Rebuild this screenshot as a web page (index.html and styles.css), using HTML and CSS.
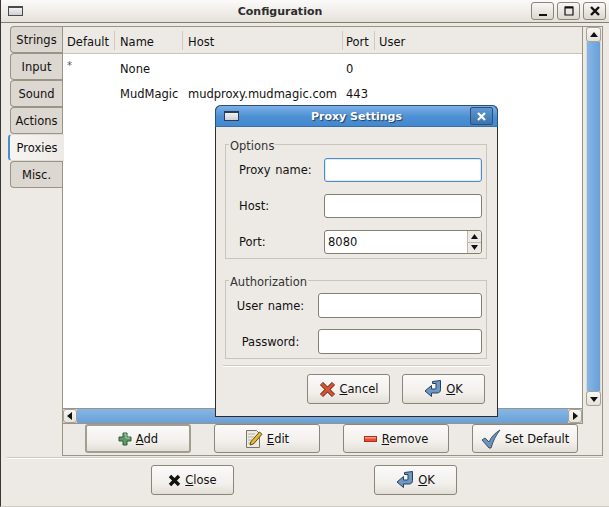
FILE: index.html
```html
<!DOCTYPE html>
<html lang="en">
<head>
<meta charset="utf-8">
<title>Configuration</title>
<link rel="stylesheet" href="styles.css">
</head>
<body>
<div class="window">
  <header class="titlebar">
    <span class="win-icon"></span>
    <span class="title">Configuration</span>
    <div class="win-buttons">
      <span class="win-btn"><svg width="12" height="12" viewBox="0 0 12 12"><rect x="2" y="9" width="8" height="2" fill="#111"/></svg></span>
      <span class="win-btn"><svg width="12" height="12" viewBox="0 0 12 12"><path d="M2 2h8v8H2z" fill="none" stroke="#111" stroke-width="1.2"/><rect x="2" y="1.5" width="8" height="2" fill="#111"/></svg></span>
      <span class="win-btn"><svg width="12" height="12" viewBox="0 0 12 12"><path d="M2 2l8 8M10 2l-8 8" stroke="#111" stroke-width="2.4"/></svg></span>
    </div>
  </header>
  <div class="body">
    <nav class="tabs">
      <div class="tab">Strings</div>
      <div class="tab">Input</div>
      <div class="tab">Sound</div>
      <div class="tab">Actions</div>
      <div class="tab active">Proxies</div>
      <div class="tab">Misc.</div>
    </nav>
    <section class="panel">
      <div class="list-row">
        <div class="list-col">
          <div class="list">
            <div class="list-head">
              <span class="c1 hd">Default</span><span class="c2 hd">Name</span><span class="c3 hd">Host</span><span class="c4 hd">Port</span><span class="c5 hd">User</span>
            </div>
            <div class="row"><span class="c1 star">*</span><span class="c2">None</span><span class="c3"></span><span class="c4">0</span><span class="c5"></span></div>
            <div class="row"><span class="c1"></span><span class="c2">MudMagic</span><span class="c3">mudproxy.mudmagic.com</span><span class="c4">443</span><span class="c5"></span></div>
          </div>
          <div class="hscroll">
            <span class="arrow-btn"><svg width="6" height="8" viewBox="0 0 6 8"><path d="M5 0v8L0 4z" fill="#111"/></svg></span>
            <span class="thumb"></span>
            <span class="arrow-btn end"><svg width="6" height="8" viewBox="0 0 6 8"><path d="M1 0v8l5-4z" fill="#111"/></svg></span>
          </div>
        </div>
        <div class="vscroll">
          <span class="arrow-btn up"><svg width="8" height="6" viewBox="0 0 8 6"><path d="M0 5h8L4 0z" fill="#111"/></svg></span>
          <span class="vthumb"></span>
          <span class="arrow-btn up"><svg width="8" height="6" viewBox="0 0 8 6"><path d="M0 1h8L4 6z" fill="#111"/></svg></span>
        </div>
      </div>
      <div class="actions">
        <button class="btn wide default"><svg class="ico" width="14" height="14" viewBox="0 0 14 14"><path d="M5 1h4v4h4v4H9v4H5V9H1V5h4z" fill="#5f9a66" stroke="#2f5b38" stroke-linejoin="round"/><path d="M6 2h2v4h4" fill="none" stroke="#a8d4ac"/></svg><span><u>A</u>dd</span></button>
        <button class="btn wide"><svg class="ico" width="18" height="20" viewBox="0 0 18 20"><path d="M1.500 1.500h10l3 3v14h-13z" fill="#eeebe2" stroke="#77746c"/><path d="M3 5h7M3 8h6M3 11h4M3 14h3" stroke="#b3b0a8"/><path d="M5 16l1-3.500L14.500 3l2.500 2.200L8.500 15z" fill="#e8b730" stroke="#4f4018" stroke-width=".9"/></svg><span><u>E</u>dit</span></button>
        <button class="btn wide"><svg class="ico" width="14" height="8" viewBox="0 0 14 8"><rect x=".5" y="1.500" width="12" height="5" fill="#ef4a35" stroke="#a8301f"/><rect x="1" y="2" width="11" height="1.500" fill="#f79a86"/></svg><span><u>R</u>emove</span></button>
        <button class="btn wide"><svg class="ico" width="20" height="20" viewBox="0 0 20 20"><path d="M1 11l3-2 4 4c2-5 6-9 11-12-4 5-7 11-9 18H8z" fill="#6f92b8" stroke="#2f4866" stroke-width=".9"/></svg><span>Set Default</span></button>
      </div>
    </section>
  </div>
  <hr class="sep main-sep">
  <footer class="footer">
    <button class="btn"><svg class="ico" width="13" height="13" viewBox="0 0 13 13"><path d="M2 2l9 9M11 2l-9 9" stroke="#111" stroke-width="3.400"/></svg><span><u>C</u>lose</span></button>
    <button class="btn"><svg class="ico" width="18" height="18" viewBox="0 0 18 18"><path d="M8.500 1.500l8-1v9c0 2.500-1.500 3.500-3.500 3.500H7.500v3.500L1 11l6.500-5.500V9H11c.8 0 1-.4 1-1V3.500H8.500z" fill="#6f97c4" stroke="#24405f" stroke-linejoin="round"/></svg><span><u>O</u>K</span></button>
  </footer>
</div>

<div class="dialog">
  <header class="dlg-title">
    <span class="win-icon dlg-icon"></span>
    <span class="dlg-text">Proxy Settings</span>
    <span class="dlg-close"><svg width="11" height="11" viewBox="0 0 11 11"><path d="M2 2l7 7M9 2l-7 7" stroke="#fff" stroke-width="2.200"/></svg></span>
  </header>
  <div class="dlg-body">
    <fieldset class="group options">
      <legend>Options</legend>
      <div class="field"><label>Proxy name:</label><div class="input focus"></div></div>
      <div class="field"><label>Host:</label><div class="input"></div></div>
      <div class="field"><label>Port:</label>
        <div class="input spin"><span class="value">8080</span>
          <span class="spin-btns">
            <span><svg width="7" height="5" viewBox="0 0 7 5"><path d="M0 5h7L3.500 0z" fill="#111"/></svg></span>
            <span><svg width="7" height="5" viewBox="0 0 7 5"><path d="M0 0h7L3.500 5z" fill="#111"/></svg></span>
          </span>
        </div>
      </div>
    </fieldset>
    <fieldset class="group auth">
      <legend>Authorization</legend>
      <div class="field"><label>User name:</label><div class="input"></div></div>
      <div class="field"><label>Password:</label><div class="input"></div></div>
    </fieldset>
    <hr class="sep dlg-sep">
    <div class="dlg-actions">
      <button class="btn"><svg class="ico" width="17" height="17" viewBox="0 0 17 17"><path d="M2.500 2.500l12 12M14.500 2.500l-12 12" stroke="#5a2a20" stroke-width="4.400"/><path d="M2.500 2.500l12 12M14.500 2.500l-12 12" stroke="#d9542e" stroke-width="2.800"/></svg><span><u>C</u>ancel</span></button>
      <button class="btn"><svg class="ico" width="18" height="18" viewBox="0 0 18 18"><path d="M8.500 1.500l8-1v9c0 2.500-1.500 3.500-3.500 3.500H7.500v3.500L1 11l6.500-5.500V9H11c.8 0 1-.4 1-1V3.500H8.500z" fill="#6f97c4" stroke="#24405f" stroke-linejoin="round"/></svg><span><u>O</u>K</span></button>
    </div>
  </div>
</div>
</body>
</html>
```

FILE: styles.css
```css
* { box-sizing: border-box; }
html, body { margin: 0; padding: 0; }
body {
  width: 609px;
  height: 507px;
  overflow: hidden;
  position: relative;
  background: #edeae6;
  font-family: "DejaVu Sans", sans-serif;
  font-size: 11.5px;
  color: #111;
}
.window {
  width: 609px;
  height: 507px;
  display: flex;
  flex-direction: column;
  border-left: 1px solid #3a3834;
  border-bottom: 1px solid #cfccc6;
}
.titlebar {
  height: 23px;
  flex: none;
  display: flex;
  align-items: center;
  position: relative;
  padding: 0 0 0 7px;
  background: linear-gradient(#fbfafa 0, #f1eeea 50%, #e6e1d9 100%);
  border-bottom: 1px solid #857f70;
}
.win-icon {
  width: 15px;
  height: 10px;
  border: 1px solid #4a4a4a;
  border-top-width: 2px;
  background: linear-gradient(#f2f2f2, #cfd0d2);
}
.title {
  position: absolute;
  left: 0;
  right: 0;
  text-align: center;
  font-weight: bold;
  font-size: 11px;
  color: #2d2d2d;
  padding-right: 50px;
}
.win-buttons {
  margin-left: auto;
  display: flex;
  gap: 3px;
  margin-right: 3px;
  margin-top: -1px;
}
.win-btn {
  width: 23px;
  height: 18px;
  border: 1px solid #8b8679;
  border-radius: 3px;
  background: linear-gradient(#f8f7f5, #dcd8d0);
  display: flex;
  align-items: center;
  justify-content: center;
}
.body {
  flex: none;
  height: 433px;
  display: flex;
  padding: 3px 6px 0 8px;
}
.tabs {
  width: 53px;
  flex: none;
  display: flex;
  flex-direction: column;
}
.tab {
  height: 27px;
  padding-top: 1px;
  display: flex;
  align-items: center;
  justify-content: center;
  background: #dcd7d0;
  border: 1px solid #9a9484;
  border-right: 0;
  border-radius: 4px 0 0 4px;
  margin-left: 1px;
  color: #111;
}
.tab.active {
  margin-left: -1px;
  margin-right: -1px;
  width: 56px;
  position: relative;
  z-index: 1;
  background: linear-gradient(90deg, #f7f5f3, #edeae6);
  border-color: #4f8ac9;
  border-left-width: 2px;
  border-top-color: #ddd;
  border-bottom-color: #ddd;
}
.panel {
  flex: 1;
  border: 1px solid #9a9484;
  display: flex;
  flex-direction: column;
  min-width: 0;
}
.list-row {
  flex: 1;
  min-height: 0;
  display: flex;
  gap: 3px;
  padding-right: 1px;
}
.list-col {
  flex: 1;
  display: flex;
  flex-direction: column;
  min-width: 0;
}
.list {
  flex: 1;
  background: #fff;
  border-bottom: 1px solid #9a9484;
  border-right: 1px solid #9a9484;
}
.list-head {
  height: 27px;
  display: flex;
  align-items: center;
  background: #edeae6;
  border-bottom: 1px solid #c9c5bc;
}
.row {
  display: flex;
  align-items: center;
  height: 25px;
  margin-top: 2px;
}
.row + .row { margin-top: 0; }
.c1 { width: 52px; padding-left: 4px; flex: none; }
.c2 { width: 68px; padding-left: 5px; flex: none; white-space: nowrap; }
.c3 { width: 160px; padding-left: 5px; flex: none; white-space: nowrap; }
.c4 { width: 32px; padding-left: 3px; flex: none; }
.c5 { flex: 1; padding-left: 4px; }
.hd { height: 19px; line-height: 22px; border-right: 1px solid #cfcbc3; }
.hd.c5 { border-right: 0; }
.star { color: #555; font-size: 10px; padding-bottom: 6px; }
.hscroll {
  height: 15px;
  flex: none;
  display: flex;
  border-right: 1px solid #9a9484;
  border-bottom: 1px solid #9a9484;
  background: #dcd7d0;
}
.arrow-btn {
  flex: none;
  width: 14px;
  display: flex;
  align-items: center;
  justify-content: center;
  border: 1px solid #a8a294;
  border-radius: 3px;
  background: linear-gradient(#f8f7f5, #e6e2dc);
}
.thumb {
  flex: 1;
  background: linear-gradient(#86b6e6, #69a0d8);
}
.vscroll {
  width: 15px;
  flex: none;
  display: flex;
  flex-direction: column;
  margin-bottom: 18px;
  background: #dcd7d0;
}
.arrow-btn.up { width: 15px; height: 15px; }
.vthumb {
  flex: 1;
  background: linear-gradient(90deg, #86b6e6, #69a0d8);
  margin: 0 1px;
}
.actions {
  flex: none;
  height: 31px;
  display: flex;
  justify-content: flex-start;
  gap: 23px;
  padding: 0 0 0 22px;
}
.btn {
  height: 30px;
  width: 83px;
  display: flex;
  align-items: center;
  justify-content: center;
  gap: 4px;
  padding: 0;
  border: 1px solid #8b8679;
  border-radius: 3px;
  background: linear-gradient(#fbfafa, #f2efeb 65%, #e2ded7);
  font-family: inherit;
  font-size: 11.5px;
  color: #111;
}
.btn.wide { width: 106px; height: 29px; }
.btn.default { border: 2px solid #a39d8e; }
.ico { flex: none; }
.sep {
  border: 0;
  margin: 0;
  height: 2px;
  background: #cfcbc3;
  border-bottom: 1px solid #fff;
}
.main-sep { margin: 1px 6px 0 6px; flex: none; }
.footer {
  flex: none;
  display: flex;
  gap: 140px;
  justify-content: flex-start;
  padding: 6px 0 0 150px;
}
.dialog {
  position: absolute;
  left: 215px;
  top: 105px;
  width: 283px;
  height: 312px;
  background: #edeae6;
  border: 1px solid #2d2c28;
  border-top: 0;
  border-radius: 6px 6px 0 0;
  z-index: 5;
  display: flex;
  flex-direction: column;
}
.dlg-title {
  height: 22px;
  flex: none;
  margin: 0 -1px;
  display: flex;
  align-items: center;
  position: relative;
  padding: 0 4px 0 8px;
  border-radius: 6px 6px 0 0;
  border: 1px solid #2a4f7d;
  border-bottom-color: #3a6ea8;
  background: linear-gradient(#7cb0e6, #4c8fd3 55%, #4388cf);
}
.dlg-icon { border-color: #2d3c55; }
.dlg-text {
  position: absolute;
  left: 0;
  right: 0;
  text-align: center;
  font-weight: bold;
  font-size: 11px;
  color: #fff;
  text-shadow: 1px 1px 1px #223d5e;
}
.dlg-close {
  margin-left: auto;
  width: 23px;
  height: 18px;
  border: 1px solid #2d4f7a;
  border-radius: 2px;
  background: linear-gradient(#5f97d1, #3b73ad);
  display: flex;
  align-items: center;
  justify-content: center;
}
.dlg-body {
  flex: 1;
  display: flex;
  flex-direction: column;
  padding: 0 8px 0 7px;
}
.group {
  margin: 0 2px;
  padding: 0;
  border: 1px solid #c9c5bc;
  min-width: 0;
  position: relative;
}
.group legend {
  padding: 3px 1px 0;
  margin-left: 3px;
  color: #333;
  line-height: 14px;
}
.options { margin-top: 9px; height: 123px; padding-top: 5px; }
.auth { margin-top: 13px; height: 87px; padding-top: 4px; }
.field {
  display: flex;
  align-items: center;
  height: 24px;
  margin-bottom: 12px;
  padding-right: 4px;
}
.auth .field { height: 25px; margin-bottom: 11px; }
.field label {
  flex: 1;
  text-align: center;
  padding-right: 3px;
  word-spacing: 1px;
}
.options .field label { text-align: left; padding-left: 13px; }
.input {
  flex: none;
  width: 158px;
  height: 100%;
  background: #fff;
  border: 1px solid #857f70;
  border-radius: 3px;
}
.auth .input { width: 164px; }
.input.focus { border-color: #4f8ac9; box-shadow: inset 0 0 0 1px #dfeafa; }
.spin { display: flex; align-items: center; padding-left: 3px; }
.spin .value { flex: 1; }
.spin-btns {
  width: 14px;
  height: 100%;
  display: flex;
  flex-direction: column;
  border-left: 1px solid #bdb9b0;
  background: #edeae6;
  border-radius: 0 3px 3px 0;
}
.spin-btns span { flex: 1; display: flex; align-items: center; justify-content: center; }
.spin-btns span + span { border-top: 1px solid #bdb9b0; }
.dlg-sep { margin: 6px -1px 0 0; flex: none; }
.dlg-actions {
  display: flex;
  justify-content: flex-end;
  gap: 12px;
  margin-top: 7px;
  padding-right: 4px;
}
```
